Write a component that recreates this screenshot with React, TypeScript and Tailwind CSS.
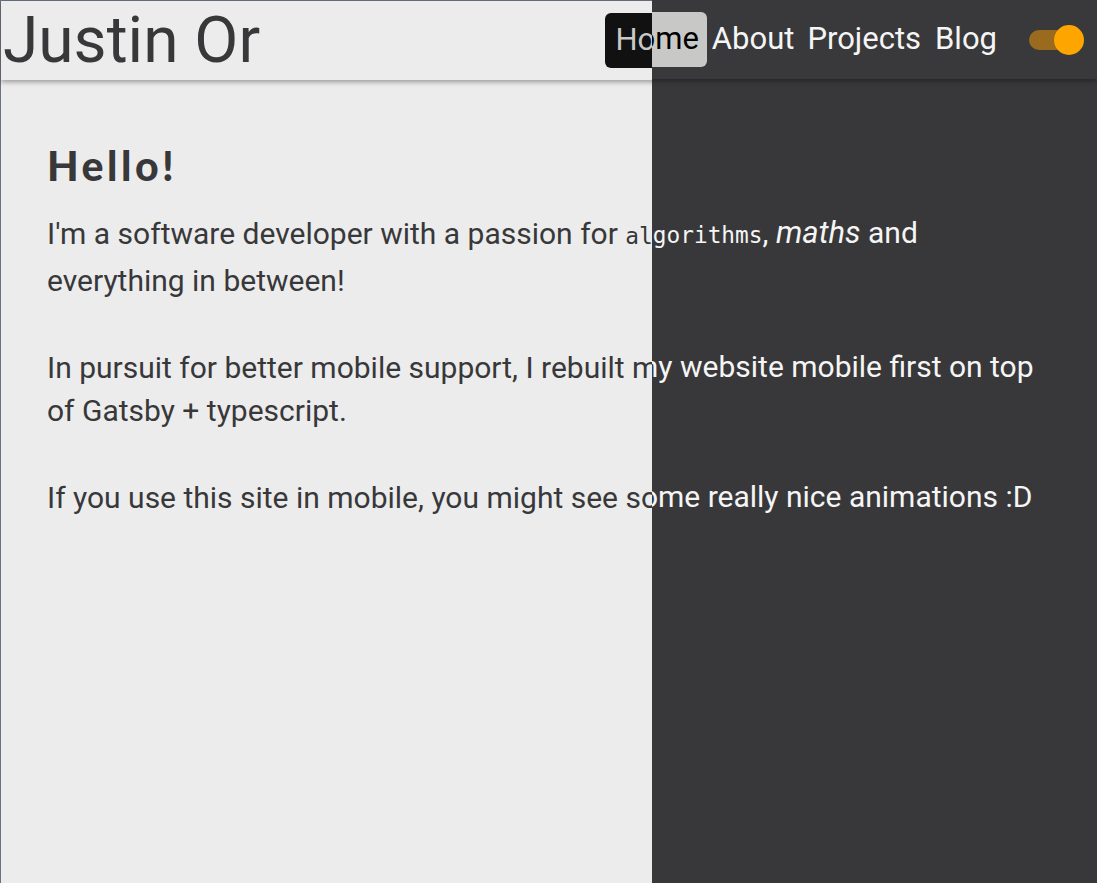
import React from "react";

function Page({ dark }: { dark: boolean }) {
  const bg = dark ? "bg-[#38383a]" : "bg-[#ececec] border-l border-t border-[#6b7280]";
  const text = dark ? "text-[#f5f5f5]" : "text-[#38383a]";
  return (
    <div className={`flex h-full w-full flex-col ${bg} ${text}`} style={{ fontFamily: "Roboto, sans-serif" }}>
      <header className={`relative z-10 flex h-[79px] shrink-0 items-center justify-between shadow-[0_2px_5px_rgba(0,0,0,0.35)] ${dark ? "bg-[#39393b]" : "bg-[#ececec]"}`}>
        <h1 className="ml-[2px] text-[64px] leading-none font-normal">Justin Or</h1>
        <div className="flex items-center">
          <nav className="flex items-center text-[31px]">
            <a className={`flex h-[55px] items-center rounded-[6px] pl-[10px] pr-[8px] ${dark ? "bg-[#c8c8c6] text-black" : "bg-[#111111] text-[#c8c8c8]"}`}>Home</a>
            <a className="pl-[5px] pr-[6px]">About</a>
            <a className="px-[7px]">Projects</a>
            <a className="px-[7px]">Blog</a>
          </nav>
          <div className="relative ml-[25px] mr-[13px] flex h-[30px] w-[55px] items-center">
            <div className="absolute left-0 h-[20px] w-[44px] rounded-full bg-[#9a6b1e]" />
            <div className="absolute right-0 h-[30px] w-[30px] rounded-full bg-[#ffa500]" />
          </div>
        </div>
      </header>
      <main className={`${dark ? "pl-[47px]" : "pl-[46px]"} pr-[47px] pt-[62px] text-[30px] leading-[43.5px]`}>
        <h2 className="mb-[22px] text-[41px] leading-[48px] font-black tracking-[3.5px]" style={{ fontFamily: "Lato, sans-serif" }}>Hello!</h2>
        <p className="mb-[43.5px]">
          I'm a software developer with a passion for{" "}
          <code className="text-[22.8px]" style={{ fontFamily: '"DejaVu Sans Mono", monospace' }}>algorithms</code>,{" "}
          <em className="text-[31px]">maths</em> and everything in between!
        </p>
        <p className="mb-[43.5px]">
          In pursuit for better mobile support, I rebuilt my website mobile first on top of Gatsby + typescript.
        </p>
        <p>If you use this site in mobile, you might see some really nice animations :D</p>
      </main>
    </div>
  );
}

export default function App() {
  return (
    <div className="relative h-[883px] w-full overflow-hidden">
      <Page dark={false} />
      <div className="absolute inset-0 z-20 [clip-path:inset(0_0_0_652px)]">
        <Page dark={true} />
      </div>
    </div>
  );
}
